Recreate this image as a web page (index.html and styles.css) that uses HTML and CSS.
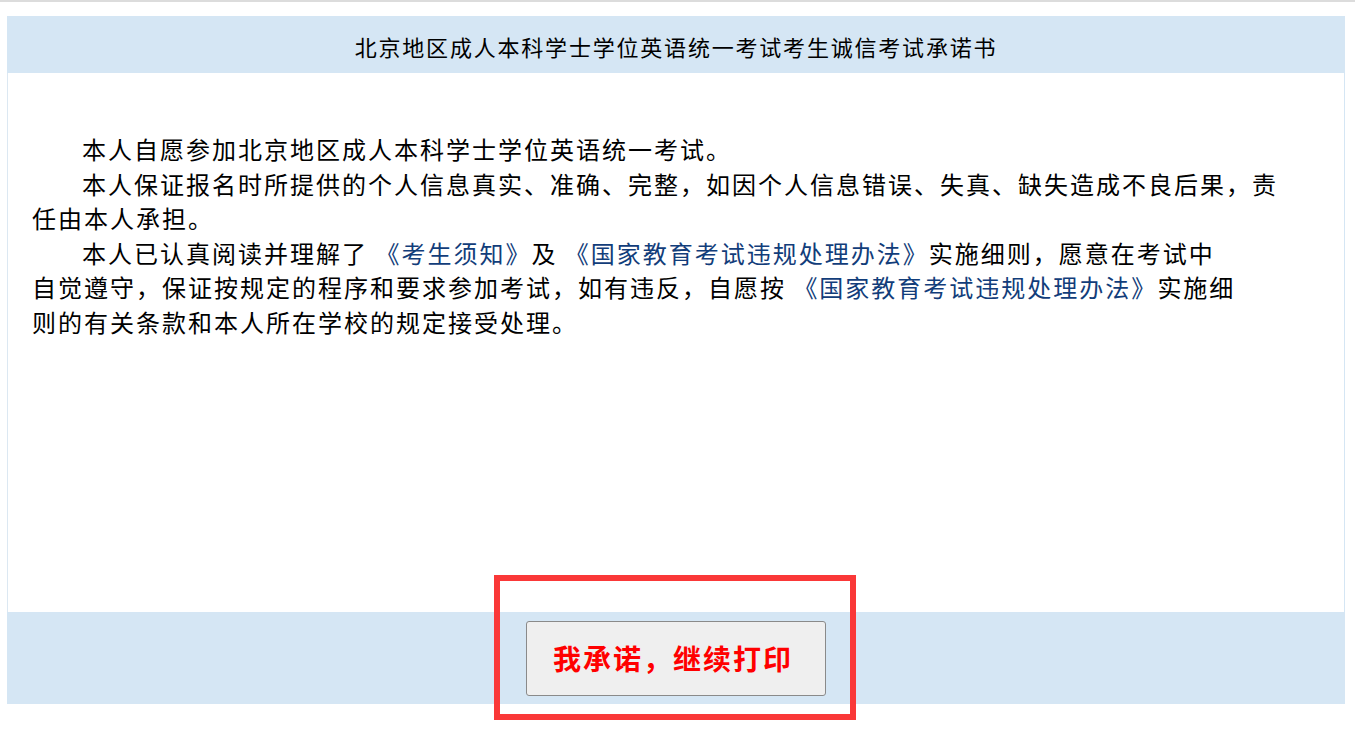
FILE: index.html
```html
<!DOCTYPE html>
<html lang="zh-CN">
<head>
    <meta charset="UTF-8">
    <title>考生诚信考试承诺书</title>
    <link rel="stylesheet" href="styles.css">
</head>

<body>
    <div class="topbar"></div>

    <!-- 承诺书 -->
    <div class="panel">
        <div class="panel-title">北京地区成人本科学士学位英语统一考试考生诚信考试承诺书</div>

        <div class="panel-body">
            <p class="indent">本人自愿参加北京地区成人本科学士学位英语统一考试。</p>
            <p class="indent">本人保证报名时所提供的个人信息真实、准确、完整，如因个人信息错误、失真、缺失造成不良后果，责<br>任由本人承担。</p>
            <p class="indent">本人已认真阅读并理解了 <a href="#">《考生须知》</a>及 <a href="#">《国家教育考试违规处理办法》</a>实施细则，愿意在考试中<br>自觉遵守，保证按规定的程序和要求参加考试，如有违反，自愿按 <a href="#">《国家教育考试违规处理办法》</a>实施细<br>则的有关条款和本人所在学校的规定接受处理。</p>
        </div>

        <div class="panel-foot">
            <div class="btn-wrap">
                <button class="btn-agree">我承诺，继续打印</button>
                <div class="mark"></div>
            </div>
        </div>
    </div>
</body>
</html>
```

FILE: styles.css
```css
body {
    margin: 0;
    font-family: "Noto Sans CJK SC", "Noto Sans", sans-serif;
    color: #000;
    background: #fff;
}
.topbar {
    height: 2px;
    background: #dcdcdc;
}
.panel {
    width: 1338px;
    margin: 14px 0 27px 7px;
}
.panel-title {
    height: 57px;
    line-height: 60px;
    background: #d5e6f4;
    text-align: center;
    font-size: 22px;
    letter-spacing: 1.8px;
}
.panel-body {
    height: 539px;
    box-sizing: border-box;
    border-left: 1px solid #dce8f2;
    border-right: 1px solid #d5e6f4;
    padding: 59px 24px 0 24px;
    font-size: 24px;
    letter-spacing: 2px;
    line-height: 34.6px;
    white-space: nowrap;
}
.panel-body p {
    margin: 0;
}
.indent {
    text-indent: 50px;
}
.panel-body a {
    color: #123d7a;
    text-decoration: none;
}
.panel-foot {
    height: 92px;
    background: #d5e6f4;
    display: flex;
    justify-content: center;
    align-items: center;
}
.btn-wrap {
    position: relative;
    z-index: 1;
}
.btn-agree {
    display: block;
    width: 300px;
    height: 75px;
    background: #efefef;
    border: 1px solid #8a8a8a;
    border-radius: 3px;
    color: #ff0000;
    font-family: "Noto Sans CJK SC", sans-serif;
    font-size: 28px;
    font-weight: bold;
    letter-spacing: 2px;
    padding: 0 6px 0 0;
}
/* 红框提示 */
.mark {
    position: absolute;
    left: -32px;
    top: -46px;
    width: 350px;
    height: 133px;
    border: 6px solid #fa3838;
}
```
